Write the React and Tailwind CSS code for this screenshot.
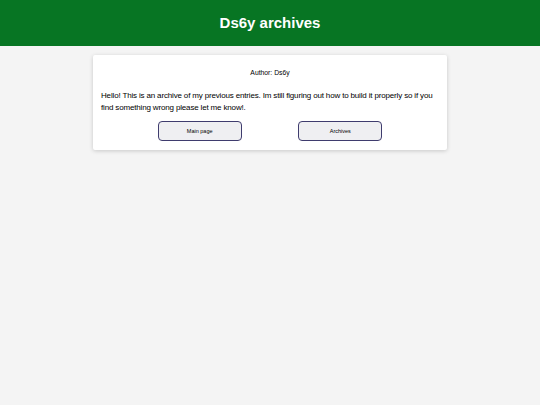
import React from "react";

function NavButton({ label }) {
    return (
        <button className="w-[84px] h-[20px] rounded-[4px] border border-[#3f3c6e] bg-[#efeff2] text-[5.5px] text-black">
            {label}
        </button>
    );
}

export default function App() {
    return (
        <div className="min-h-[405px] bg-[#f4f4f4] font-['Liberation_Sans',Arial,sans-serif]">
            <header className="h-[46px] bg-[#077523] flex items-center justify-center">
                <h1 className="text-[15px] font-bold text-white">Ds6y archives</h1>
            </header>

            <main className="w-[354px] mx-auto mt-[9px] bg-white rounded-[2px] shadow-[0_1px_4px_rgba(0,0,0,0.18)] px-[8px] pt-[13px] pb-[9px]">
                <p className="text-center text-[6.8px] text-black">Author: Ds6y</p>
                <p className="mt-[12px] text-[8px] tracking-[-0.16px] leading-[12px] text-black">
                    Hello! This is an archive of my previous entries. Im still figuring out how to build it properly so if you find something wrong please let me know!.
                </p>
                <div className="mt-[7px] flex justify-evenly">
                    <NavButton label="Main page" />
                    <NavButton label="Archives" />
                </div>
            </main>
        </div>
    );
}
